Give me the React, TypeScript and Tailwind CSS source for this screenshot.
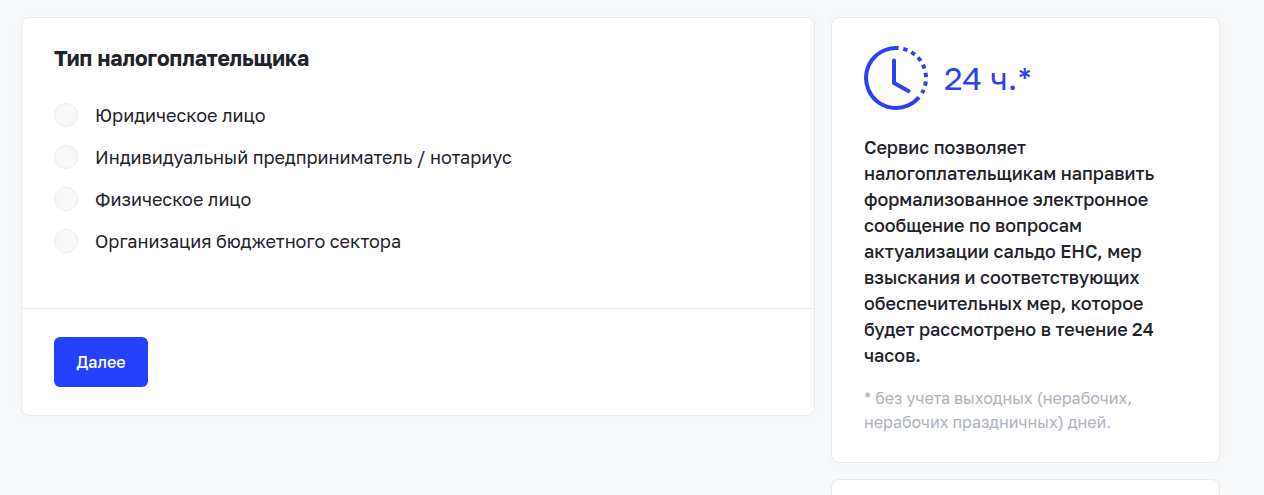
const taxpayerTypes = [
  { value: "legal", label: "Юридическое лицо" },
  { value: "entrepreneur", label: "Индивидуальный предприниматель / нотариус" },
  { value: "individual", label: "Физическое лицо" },
  { value: "budget", label: "Организация бюджетного сектора" },
];

function ClockIcon() {
  return (
    <svg className="h-16 w-16 shrink-0" viewBox="0 0 64 64" fill="none" stroke="#2a43ee" strokeWidth="4" aria-hidden="true">
      <path d="M34.6 2.1A30 30 0 1 0 55 51.3" />
      <path d="M39.3 2.9A30 30 0 0 1 58 47" strokeDasharray="4.4 4.2" />
      <path d="M30 14.5V37l14.5 8" strokeLinecap="round" strokeLinejoin="round" />
    </svg>
  );
}

function TaxpayerForm() {
  return (
    <form className="min-w-0 flex-1 rounded-lg border border-[#e8eaed] bg-white shadow-[0_0_16px_rgba(0,0,0,0.02)]">
      <fieldset className="px-8 pt-[26px] pb-[54px]">
        <legend className="float-left mb-[30px] w-full text-[21px] leading-7 font-bold">Тип налогоплательщика</legend>
        <div className="clear-both flex flex-col gap-4">
          {taxpayerTypes.map((type) => (
            <label key={type.value} className="flex items-center gap-[17px] text-lg leading-[26px]">
              <input
                type="radio"
                name="taxpayer"
                value={type.value}
                className="h-6 w-6 shrink-0 appearance-none rounded-full border border-[#e8ecef] bg-[#f8f9fb] checked:border-8 checked:border-[#2341ff]"
              />
              {type.label}
            </label>
          ))}
        </div>
      </fieldset>
      <div className="border-t border-[#e8eaed] px-8 py-7">
        <button type="button" className="h-[50px] min-w-[94px] rounded-md bg-[#2341ff] px-5 text-base font-medium text-white">
          Далее
        </button>
      </div>
    </form>
  );
}

export default function App() {
  return (
    <main className="flex min-h-screen items-start gap-4 bg-[#f8f9fb] pt-[17px] pr-11 pl-[21px] font-['Golos_Text','Golos_UI',Inter,sans-serif] text-[#1f232b]">
      <TaxpayerForm />
      <aside className="flex w-[389px] shrink-0 flex-col gap-4">
        <section className="rounded-lg border border-[#e8eaed] bg-white px-8 py-7 shadow-[0_0_16px_rgba(0,0,0,0.02)]">
          <div className="mb-6 flex items-center gap-4 text-[#2a43ee]">
            <ClockIcon />
            <p className="text-[32px] leading-10">24 ч.*</p>
          </div>
          <p className="mb-[18px] text-lg leading-[26px] font-medium">
            Сервис позволяет налогоплательщикам направить формализованное электронное сообщение по вопросам
            актуализации сальдо ЕНС, мер взыскания и соответствующих обеспечительных мер, которое будет рассмотрено в
            течение 24 часов.
          </p>
          <p className="text-base leading-6 text-[#adb3bd]">
            * без учета выходных (нерабочих, нерабочих праздничных) дней.
          </p>
        </section>
        <section className="h-16 rounded-lg border border-[#e8eaed] bg-white" />
      </aside>
    </main>
  );
}
